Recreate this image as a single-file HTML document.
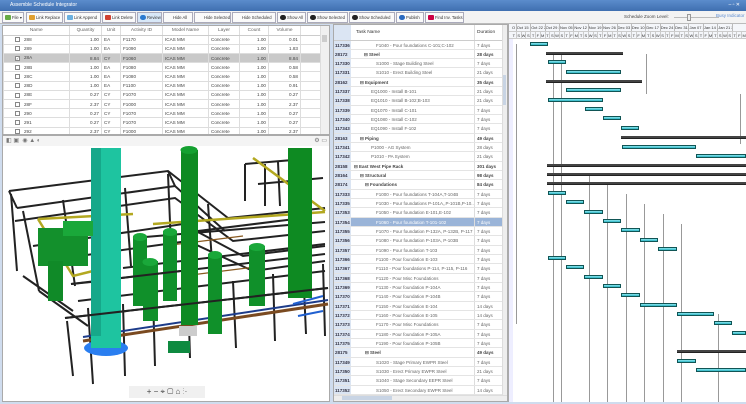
<!DOCTYPE html>
<html><head><meta charset="utf-8"><style>
*{box-sizing:border-box;margin:0;padding:0}
body{width:746px;height:404px;overflow:hidden;background:#cfdcee;font-family:"Liberation Sans",sans-serif;font-size:5px;color:#444;position:relative}
.a{position:absolute}
.title{left:0;top:0;width:746px;height:11px;background:linear-gradient(#5b8ccc,#3f6fb0);color:#fff;font-size:5px;line-height:11px;padding-left:10px}
.tb{left:0;top:11px;width:746px;height:13px;background:#f3f3f3;border-bottom:1px solid #bbb}
.btn{position:absolute;top:1px;height:11px;border:1px solid #aab;background:#fafafa;font-size:4.2px;line-height:9px;padding-left:9px;color:#333;white-space:nowrap;overflow:hidden}
.btn i{position:absolute;left:1.5px;top:2px;width:6px;height:5px;border-radius:1px}
table{border-collapse:collapse}
.lt td{height:9.23px;border:1px solid #ddd;font-size:4.6px;padding:0 2px;white-space:nowrap;overflow:hidden}
.lt th{height:9px;font-weight:normal;color:#666;border-right:1px solid #ddd;border-bottom:1px solid #ccc;font-size:4.8px}
.r{text-align:right}
.cb{display:inline-block;width:5px;height:5px;border:1px solid #888;background:#fff;vertical-align:middle;margin:0 4px 0 9px;font-size:4px;line-height:3px}
.tk div.row{height:9.33px;display:flex;border-bottom:1px solid #e4e4e4;font-size:4.5px;line-height:9px;white-space:nowrap}
.tk .id{width:17px;background:#dbe5f3;color:#334;font-weight:bold;padding-left:1px;flex:none}
.tk .nm{width:124px;border-right:1px solid #ddd;overflow:hidden;flex:none;color:#666}
.tk .du{width:29px;padding-left:2px;color:#666}
.b .nm,.b .du{font-weight:bold;color:#444}
.sel .nm,.sel .du{background:#9ab4d8;color:#fff}
.bar{position:absolute;height:4px;background:linear-gradient(#8ee6ef,#2bb5c4);border:1px solid #155}
.sum{position:absolute;height:3px;background:#444;border-bottom:1px solid #222}
.vl{position:absolute;width:1px;background:#999}
.hd1 span{display:inline-block;width:14.4px;border-right:1px solid #bbb;overflow:hidden;white-space:nowrap}
.hd2 span{display:inline-block;width:4.8px;border-right:1px solid #ccc;text-align:center}
</style></head><body>
<div class="a title">Assemble Schedule Integrator<span style="position:absolute;right:6px;">– ▫ ✕</span></div>
<div class="a tb">
<div class="btn" style="left:2px;width:22px"><i style="background:#6a4"></i>File ▾</div>
<div class="btn" style="left:26px;width:37px"><i style="background:#e0a030"></i>Link Replace</div>
<div class="btn" style="left:64px;width:37px"><i style="background:#6ab0e0"></i>Link Append</div>
<div class="btn" style="left:102px;width:34px"><i style="background:#d04030"></i>Link Delete</div>
<div class="btn" style="left:137px;width:25px;background:#d8e8f8"><i style="background:#2a7ad0;border-radius:3px"></i>Review</div>
<div class="btn" style="left:163px;width:30px">Hide All</div>
<div class="btn" style="left:194px;width:37px">Hide Selected</div>
<div class="btn" style="left:232px;width:44px">Hide Scheduled</div>
<div class="btn" style="left:277px;width:29px"><i style="background:#222;border-radius:3px"></i>Show All</div>
<div class="btn" style="left:307px;width:41px"><i style="background:#222;border-radius:3px"></i>Show Selected</div>
<div class="btn" style="left:349px;width:46px"><i style="background:#222;border-radius:3px"></i>Show Scheduled</div>
<div class="btn" style="left:396px;width:28px"><i style="background:#2a6ac0;border-radius:3px"></i>Publish</div>
<div class="btn" style="left:425px;width:39px"><i style="background:#c04"></i>Find Inv. Tasks</div>
<div class="a" style="left:624px;top:3px;font-size:4.5px">Schedule Zoom Level:</div>
<div class="a" style="left:674px;top:6px;width:45px;height:1px;background:#bbb"></div>
<div class="a" style="left:687px;top:3px;width:4px;height:7px;background:#eee;border:1px solid #999"></div>
<div class="a" style="left:716px;top:2px;font-size:4.5px;color:#5a8ad0;white-space:nowrap">Busy Indicator</div>
</div>
<!-- left table -->
<div class="a" style="left:2px;top:25px;width:328px;height:110px;background:#fff;border:1px solid #aaa;overflow:hidden">
<table class="lt" style="width:318px">
<tr><th style="width:66px">Name</th><th style="width:32px">Quantity</th><th style="width:19px">Unit</th><th style="width:42px">Activity ID</th><th style="width:46px">Model Name</th><th style="width:31px">Layer</th><th style="width:29px">Count</th><th style="width:32px">Volume</th><th></th></tr>
<tr><td><span class="cb"></span>288</td><td class="r">1.00</td><td>EA</td><td>F1170</td><td>ICAS MM</td><td>Concrete</td><td class="r">1.00</td><td class="r">0.01</td><td></td></tr>
<tr><td><span class="cb"></span>289</td><td class="r">1.00</td><td>EA</td><td>F1090</td><td>ICAS MM</td><td>Concrete</td><td class="r">1.00</td><td class="r">1.83</td><td></td></tr>
<tr style="background:#c9c9c9"><td><span class="cb">✓</span>28A</td><td class="r">8.84</td><td>CY</td><td>F1060</td><td>ICAS MM</td><td>Concrete</td><td class="r">1.00</td><td class="r">8.84</td><td></td></tr>
<tr><td><span class="cb"></span>28B</td><td class="r">1.00</td><td>EA</td><td>F1080</td><td>ICAS MM</td><td>Concrete</td><td class="r">1.00</td><td class="r">0.58</td><td></td></tr>
<tr><td><span class="cb"></span>28C</td><td class="r">1.00</td><td>EA</td><td>F1080</td><td>ICAS MM</td><td>Concrete</td><td class="r">1.00</td><td class="r">0.58</td><td></td></tr>
<tr><td><span class="cb"></span>28D</td><td class="r">1.00</td><td>EA</td><td>F1100</td><td>ICAS MM</td><td>Concrete</td><td class="r">1.00</td><td class="r">0.91</td><td></td></tr>
<tr><td><span class="cb"></span>28E</td><td class="r">0.27</td><td>CY</td><td>F1070</td><td>ICAS MM</td><td>Concrete</td><td class="r">1.00</td><td class="r">0.27</td><td></td></tr>
<tr><td><span class="cb"></span>28F</td><td class="r">2.37</td><td>CY</td><td>F1000</td><td>ICAS MM</td><td>Concrete</td><td class="r">1.00</td><td class="r">2.37</td><td></td></tr>
<tr><td><span class="cb"></span>290</td><td class="r">0.27</td><td>CY</td><td>F1070</td><td>ICAS MM</td><td>Concrete</td><td class="r">1.00</td><td class="r">0.27</td><td></td></tr>
<tr><td><span class="cb"></span>291</td><td class="r">0.27</td><td>CY</td><td>F1070</td><td>ICAS MM</td><td>Concrete</td><td class="r">1.00</td><td class="r">0.27</td><td></td></tr>
<tr><td><span class="cb"></span>292</td><td class="r">2.37</td><td>CY</td><td>F1000</td><td>ICAS MM</td><td>Concrete</td><td class="r">1.00</td><td class="r">2.37</td><td></td></tr>
</table>
<div class="a" style="right:0;top:0;width:9px;height:110px;background:#f0f0f0;border-left:1px solid #ddd"></div>
<div class="a" style="right:2px;top:9px;width:5px;height:7px;background:#ccc"></div>
</div>
<!-- viewer -->
<div class="a" style="left:2px;top:135px;width:328px;height:267px;background:#fff;border:1px solid #aaa;overflow:hidden">
<div class="a" style="left:0;top:0;width:328px;height:10px;background:#f4f4f4;color:#777;font-size:6px;line-height:10px;padding-left:3px">◧ ▣ &nbsp;◉ ▲ ◐<span style="position:absolute;right:4px">⚙ ▭</span></div>
<svg class="a" style="left:0;top:10px" width="328" height="257" viewBox="0 10 328 257">
<g stroke="#222" stroke-width="2" fill="none">
<path d="M6 55 L165 35 L225 82 L322 72"/>
<path d="M14 72 L172 50 L222 95"/>
<path d="M6 55 L14 72 M165 35 L172 50"/>
<path d="M8 58 L14 135 M20 75 L36 155 M60 64 L72 150 M95 58 L100 140 M122 52 L128 130 M165 38 L168 110 M205 68 L210 140"/>
<path d="M12 85 L172 62 L230 105 L322 95"/>
<path d="M30 110 L180 88 L240 120 L322 110"/>
<path d="M40 125 L185 105 L250 135 L322 125"/>
<path d="M68 148 L322 118"/>
<path d="M75 165 L322 135"/>
<path d="M62 182 L325 152"/>
<path d="M64 185 L70 240 M85 172 L90 248 M120 168 L122 240 M150 160 L152 230 M185 155 L187 222 M230 145 L233 212 M270 138 L272 205 M300 130 L303 198 M320 128 L322 200"/>
<path d="M242 28 L290 24 L300 72 M242 28 L242 65 M255 48 L320 42 M262 28 L262 70 M275 26 L277 70"/>
<path d="M130 102 L322 86 M195 95 L300 82 M120 132 L322 108"/>
<path d="M20 140 L70 175 M36 155 L85 190"/>
</g>
<path d="M80 205 L325 168" stroke="#7a4a20" stroke-width="3"/>
<path d="M80 201 L325 164" stroke="#1d3c8a" stroke-width="2"/>
<path d="M35 83 L130 78 M35 83 L70 140 L90 135 M150 88 L322 76 M250 22 L322 75" stroke="#b3a820" stroke-width="2.5" fill="none"/>
<path d="M160 110 L240 100 M180 140 L260 130" stroke="#8a5a20" stroke-width="1.2"/>
<rect x="88" y="12" width="30" height="200" fill="#1ec4a0"/><rect x="88" y="12" width="10" height="200" fill="#16a88a"/>
<ellipse cx="103" cy="212" rx="22" ry="8" fill="#2a7ef0"/><rect x="88" y="200" width="30" height="12" fill="#1ec4a0"/>
<rect x="178" y="14" width="17" height="175" fill="#0e8a22"/><ellipse cx="186" cy="14" rx="8.5" ry="4" fill="#14a030"/>
<rect x="285" y="12" width="24" height="150" fill="#0e8a22"/>
<rect x="130" y="100" width="14" height="70" fill="#10902a"/><ellipse cx="137" cy="101" rx="7" ry="4" fill="#1aa83a"/>
<rect x="160" y="95" width="14" height="70" fill="#10902a"/><ellipse cx="167" cy="96" rx="7" ry="4" fill="#1aa83a"/>
<rect x="140" y="125" width="15" height="60" fill="#10902a"/><ellipse cx="147" cy="126" rx="7.5" ry="4" fill="#1aa83a"/>
<rect x="205" y="118" width="14" height="80" fill="#10902a"/><ellipse cx="212" cy="119" rx="7" ry="4" fill="#1aa83a"/>
<rect x="246" y="110" width="16" height="60" fill="#10902a"/><ellipse cx="254" cy="111" rx="8" ry="4" fill="#1aa83a"/>
<rect x="35" y="92" width="50" height="38" fill="#13902c"/><rect x="60" y="85" width="30" height="15" fill="#1aa83a"/>
<rect x="45" y="125" width="15" height="40" fill="#108a28"/>
<rect x="165" y="205" width="22" height="12" fill="#0e8a40"/><rect x="176" y="190" width="18" height="10" fill="#ccc"/>
<path d="M290 168 L320 160 M295 180 L320 175" stroke="#2060d0" stroke-width="2"/>
<g stroke="#222" stroke-width="2"><path d="M62 182 L325 152 M68 148 L88 146 M118 142 L178 135"/></g>
</svg>
<div class="a" style="left:126px;top:250px;width:76px;height:12px;background:#f0f0f0;font-size:8px;line-height:12px;color:#444;text-align:center">+ − ⌖ ▢ ⌂ ⋮·</div>
</div>
<!-- task list -->
<div class="a tk" style="left:333px;top:24px;width:175px;height:378px;background:#fff;border:1px solid #aaa;overflow:hidden">
<div style="height:15.5px;display:flex;border-bottom:1px solid #ccc;font-size:4.8px;line-height:15px;color:#333"><div style="width:17px;background:#dbe5f3"></div><div style="width:124px;padding-left:5px;border-right:1px solid #ddd">Task Name</div><div style="padding-left:2px">Duration</div></div>
<div class="row"><div class="id">117336</div><div class="nm" style="padding-left:25px">F1040 - Pour foundations C-101;C-102</div><div class="du">7 days</div></div>
<div class="row b"><div class="id">28172</div><div class="nm" style="padding-left:13px">⊟ Steel</div><div class="du">28 days</div></div>
<div class="row"><div class="id">117330</div><div class="nm" style="padding-left:25px">S1000 - Stage Building Steel</div><div class="du">7 days</div></div>
<div class="row"><div class="id">117331</div><div class="nm" style="padding-left:25px">S1010 - Erect Building Steel</div><div class="du">21 days</div></div>
<div class="row b"><div class="id">28162</div><div class="nm" style="padding-left:9px">⊟ Equipment</div><div class="du">35 days</div></div>
<div class="row"><div class="id">117337</div><div class="nm" style="padding-left:20px">EQ1000 - Install B-101</div><div class="du">21 days</div></div>
<div class="row"><div class="id">117338</div><div class="nm" style="padding-left:20px">EQ1010 - Install B-102;B-103</div><div class="du">21 days</div></div>
<div class="row"><div class="id">117339</div><div class="nm" style="padding-left:20px">EQ1070 - Install C-101</div><div class="du">7 days</div></div>
<div class="row"><div class="id">117340</div><div class="nm" style="padding-left:20px">EQ1080 - Install C-102</div><div class="du">7 days</div></div>
<div class="row"><div class="id">117343</div><div class="nm" style="padding-left:20px">EQ1090 - Install F-102</div><div class="du">7 days</div></div>
<div class="row b"><div class="id">28163</div><div class="nm" style="padding-left:9px">⊟ Piping</div><div class="du">49 days</div></div>
<div class="row"><div class="id">117341</div><div class="nm" style="padding-left:20px">P1000 - AG System</div><div class="du">28 days</div></div>
<div class="row"><div class="id">117342</div><div class="nm" style="padding-left:20px">P1010 - PA System</div><div class="du">21 days</div></div>
<div class="row b"><div class="id">28158</div><div class="nm" style="padding-left:3px">⊟ East West Pipe Rack</div><div class="du">301 days</div></div>
<div class="row b"><div class="id">28164</div><div class="nm" style="padding-left:9px">⊟ Structural</div><div class="du">98 days</div></div>
<div class="row b"><div class="id">28174</div><div class="nm" style="padding-left:14px">⊟ Foundations</div><div class="du">84 days</div></div>
<div class="row"><div class="id">117333</div><div class="nm" style="padding-left:25px">F1000 - Pour foundations T-104A,T-104B</div><div class="du">7 days</div></div>
<div class="row"><div class="id">117335</div><div class="nm" style="padding-left:25px">F1030 - Pour foundations P-101A,,P-101B,P-10...</div><div class="du">7 days</div></div>
<div class="row"><div class="id">117353</div><div class="nm" style="padding-left:25px">F1050 - Pour foundation E-101,E-102</div><div class="du">7 days</div></div>
<div class="row sel"><div class="id">117354</div><div class="nm" style="padding-left:25px">F1060 - Pour foundation T-101-102</div><div class="du">7 days</div></div>
<div class="row"><div class="id">117355</div><div class="nm" style="padding-left:25px">F1070 - Pour foundation P-132A, P-132B, P-117</div><div class="du">7 days</div></div>
<div class="row"><div class="id">117356</div><div class="nm" style="padding-left:25px">F1080 - Pour foundation P-103A, P-103B</div><div class="du">7 days</div></div>
<div class="row"><div class="id">117357</div><div class="nm" style="padding-left:25px">F1090 - Pour foundation T-103</div><div class="du">7 days</div></div>
<div class="row"><div class="id">117366</div><div class="nm" style="padding-left:25px">F1100 - Pour foundation E-103</div><div class="du">7 days</div></div>
<div class="row"><div class="id">117367</div><div class="nm" style="padding-left:25px">F1110 - Pour foundations P-114, P-115, P-116</div><div class="du">7 days</div></div>
<div class="row"><div class="id">117368</div><div class="nm" style="padding-left:25px">F1120 - Pour Misc Foundations</div><div class="du">7 days</div></div>
<div class="row"><div class="id">117369</div><div class="nm" style="padding-left:25px">F1130 - Pour foundation P-104A</div><div class="du">7 days</div></div>
<div class="row"><div class="id">117370</div><div class="nm" style="padding-left:25px">F1140 - Pour foundation P-104B</div><div class="du">7 days</div></div>
<div class="row"><div class="id">117371</div><div class="nm" style="padding-left:25px">F1150 - Pour foundation E-104</div><div class="du">14 days</div></div>
<div class="row"><div class="id">117372</div><div class="nm" style="padding-left:25px">F1160 - Pour foundation E-105</div><div class="du">14 days</div></div>
<div class="row"><div class="id">117373</div><div class="nm" style="padding-left:25px">F1170 - Pour Misc Foundations</div><div class="du">7 days</div></div>
<div class="row"><div class="id">117374</div><div class="nm" style="padding-left:25px">F1180 - Pour foundation P-105A</div><div class="du">7 days</div></div>
<div class="row"><div class="id">117375</div><div class="nm" style="padding-left:25px">F1190 - Pour foundation P-105B</div><div class="du">7 days</div></div>
<div class="row b"><div class="id">28175</div><div class="nm" style="padding-left:14px">⊟ Steel</div><div class="du">49 days</div></div>
<div class="row"><div class="id">117349</div><div class="nm" style="padding-left:25px">S1020 - Stage Primary EWPR Steel</div><div class="du">7 days</div></div>
<div class="row"><div class="id">117350</div><div class="nm" style="padding-left:25px">S1030 - Erect Primary EWPR Steel</div><div class="du">21 days</div></div>
<div class="row"><div class="id">117351</div><div class="nm" style="padding-left:25px">S1040 - Stage Secondary EEPR Steel</div><div class="du">7 days</div></div>
<div class="row"><div class="id">117352</div><div class="nm" style="padding-left:25px">S1050 - Erect Secondary EWPR Steel</div><div class="du">14 days</div></div>
<div class="a" style="right:0;top:0;width:5px;height:378px;background:#eee;border-left:1px solid #ddd"></div>
<div class="a" style="right:1px;top:50px;width:3px;height:30px;background:#c8d4e4"></div>
<div class="a" style="left:0;bottom:0;width:175px;height:6px;background:#eee;border-top:1px solid #ddd"></div>
<div class="a" style="left:8px;bottom:1px;width:50px;height:4px;background:#c8d4e4"></div>
</div>
<!-- gantt -->
<div class="a" style="left:508px;top:24px;width:238px;height:378px;background:#fff;border-left:1px solid #aaa;overflow:hidden">
<div class="a" style="left:0;top:0;width:260px;height:15px;background:#f4f6fa;border-bottom:1px solid #ccc;font-size:4px;line-height:7px;white-space:nowrap;color:#333">
<div class="hd1" style="padding-left:3px;border-bottom:1px solid #ccc;height:7.5px"><span style="width:4.8px">O</span><span>Oct 15 2</span><span>Oct 22 2</span><span>Oct 29 2</span><span>Nov 05 2</span><span>Nov 12 2</span><span>Nov 19 2</span><span>Nov 26 2</span><span>Dec 03 2</span><span>Dec 10 2</span><span>Dec 17 2</span><span>Dec 24 2</span><span>Dec 31 2</span><span>Jan 07 2</span><span>Jan 14 2</span><span>Jan 21 2</span></div>
<div class="hd2" style="padding-left:3px"><span>T</span><span>S</span><span>W</span><span>S</span><span>T</span><span>F</span><span>M</span><span>T</span><span>S</span><span>W</span><span>S</span><span>T</span><span>F</span><span>M</span><span>T</span><span>S</span><span>W</span><span>S</span><span>T</span><span>F</span><span>M</span><span>T</span><span>S</span><span>W</span><span>S</span><span>T</span><span>F</span><span>M</span><span>T</span><span>S</span><span>W</span><span>S</span><span>T</span><span>F</span><span>M</span><span>T</span><span>S</span><span>W</span><span>S</span><span>T</span><span>F</span><span>M</span><span>T</span><span>S</span><span>W</span><span>S</span><span>T</span><span>F</span><span>M</span><span>T</span></div>
</div>
<div class="a" style="left:0;top:15px;width:4px;height:363px;background:#eef"></div>
<div class="vl" style="left:7px;top:20px;height:280px"></div>
<div class="vl" style="left:44px;top:30px;height:348px"></div>
<div class="vl" style="left:52px;top:30px;height:348px"></div>
<div class="vl" style="left:80px;top:150px;height:228px"></div>
<div class="vl" style="left:98px;top:160px;height:218px"></div>
<div class="vl" style="left:117px;top:170px;height:208px"></div>
<div class="vl" style="left:135px;top:180px;height:198px"></div>
<div class="vl" style="left:154px;top:190px;height:188px"></div>
<div class="vl" style="left:172px;top:200px;height:178px"></div>
<div class="vl" style="left:209px;top:290px;height:88px"></div>
<div class="vl" style="left:137px;top:30px;height:40px"></div>
<div class="vl" style="left:231px;top:70px;height:50px"></div>
</div>
<div class="a" style="left:508px;top:0;width:238px;height:404px;pointer-events:none">
<div class="bar" style="left:22px;top:42px;width:18px"></div>
<div class="sum" style="left:38px;top:52px;width:77px"></div>
<div class="bar" style="left:40px;top:60px;width:18px"></div>
<div class="bar" style="left:58px;top:70px;width:55px"></div>
<div class="sum" style="left:38px;top:80px;width:96px"></div>
<div class="bar" style="left:58px;top:88px;width:55px"></div>
<div class="bar" style="left:40px;top:98px;width:55px"></div>
<div class="bar" style="left:77px;top:107px;width:18px"></div>
<div class="bar" style="left:95px;top:116px;width:18px"></div>
<div class="bar" style="left:113px;top:126px;width:18px"></div>
<div class="sum" style="left:113px;top:136px;width:125px"></div>
<div class="bar" style="left:114px;top:145px;width:74px"></div>
<div class="bar" style="left:188px;top:154px;width:50px"></div>
<div class="sum" style="left:39px;top:164px;width:199px"></div>
<div class="sum" style="left:39px;top:173px;width:199px"></div>
<div class="sum" style="left:39px;top:182px;width:199px"></div>
<div class="bar" style="left:40px;top:191px;width:18px"></div>
<div class="bar" style="left:58px;top:200px;width:18px"></div>
<div class="bar" style="left:76px;top:210px;width:19px"></div>
<div class="bar" style="left:95px;top:219px;width:18px"></div>
<div class="bar" style="left:113px;top:228px;width:19px"></div>
<div class="bar" style="left:132px;top:238px;width:18px"></div>
<div class="bar" style="left:150px;top:247px;width:19px"></div>
<div class="bar" style="left:40px;top:256px;width:18px"></div>
<div class="bar" style="left:58px;top:265px;width:18px"></div>
<div class="bar" style="left:76px;top:275px;width:19px"></div>
<div class="bar" style="left:95px;top:284px;width:18px"></div>
<div class="bar" style="left:113px;top:293px;width:19px"></div>
<div class="bar" style="left:132px;top:303px;width:37px"></div>
<div class="bar" style="left:169px;top:312px;width:37px"></div>
<div class="bar" style="left:206px;top:321px;width:18px"></div>
<div class="bar" style="left:224px;top:331px;width:14px"></div>
<div class="sum" style="left:169px;top:350px;width:69px"></div>
<div class="bar" style="left:169px;top:359px;width:19px"></div>
<div class="bar" style="left:188px;top:368px;width:50px"></div>
</div>
</body></html>
